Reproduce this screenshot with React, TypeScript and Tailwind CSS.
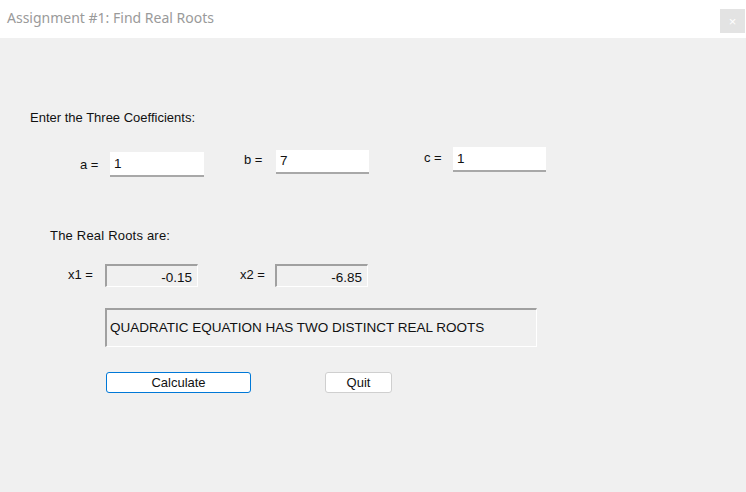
import React from "react";

const sans = { fontFamily: '"Liberation Sans", Arial, sans-serif' };

export default function App() {
  return (
    <div className="w-[746px] h-[492px] overflow-hidden bg-[#f0f0f0] text-[#111]" style={sans}>
      {/* Title bar */}
      <div className="h-[38px] bg-white flex justify-between">
        <div className="pl-[7px] pt-[7px] text-[14px] text-[#9a9a9a]" style={{ fontFamily: '"Noto Sans", "Open Sans", sans-serif' }}>
          Assignment #1: Find Real Roots
        </div>
        <div className="mt-[9px] mr-[1px] w-[25px] h-[24px] bg-[#e3e3e3] flex items-center justify-center text-white text-[13px] leading-none">
          ×
        </div>
      </div>

      {/* Content */}
      <div className="pl-[30px] text-[13px]">
        <div className="pt-[72px] leading-[15px]">Enter the Three Coefficients:</div>

        <div className="flex items-start mt-[22px]">
          <div className="ml-[50px] mt-[5px] flex items-center">
            <span className="w-[30px]">a =</span>
            <div className="w-[94px] h-[25px] bg-white border-b-2 border-[#a8a8a8] pl-[4px] text-[13.5px] leading-[23px]">1</div>
          </div>
          <div className="ml-[40px] mt-[3px] flex items-center">
            <span className="w-[32px] -mt-[4px]">b =</span>
            <div className="w-[93px] h-[24px] bg-white border-b-2 border-[#a8a8a8] pl-[4px] text-[13.5px] leading-[22px]">7</div>
          </div>
          <div className="ml-[55px] flex items-center">
            <span className="w-[29px] -mt-[4px]">c =</span>
            <div className="w-[93px] h-[25px] bg-white border-b-2 border-[#a8a8a8] pl-[4px] text-[13.5px] leading-[23px]">1</div>
          </div>
        </div>

        <div className="ml-[20px] mt-[51px] leading-[15px] tracking-[0.2px]">The Real Roots are:</div>

        <div className="flex items-center mt-[21px]">
          <span className="ml-[38px] w-[37px] -mt-[2px]">x1 =</span>
          <div className="w-[93px] h-[23px] border-t-2 border-l-2 border-[#a0a0a0] border-b border-r border-b-white border-r-white text-right pr-[5px] text-[13.5px] leading-[21px] pt-[1px]">-0.15</div>
          <span className="ml-[42px] w-[35px] -mt-[2px]">x2 =</span>
          <div className="w-[93px] h-[23px] border-t-2 border-l-2 border-[#a0a0a0] border-b border-r border-b-white border-r-white text-right pr-[5px] text-[13.5px] leading-[21px] pt-[1px]">-6.85</div>
        </div>

        <div className="ml-[75px] mt-[21px] w-[432px] h-[39px] border-t-2 border-l-2 border-[#a0a0a0] border-b border-r border-b-white border-r-white pl-[3px] flex items-center text-[13.5px]">
          QUADRATIC EQUATION HAS TWO DISTINCT REAL ROOTS
        </div>

        <div className="flex mt-[25px]">
          <div className="ml-[76px] w-[145px] h-[21px] bg-white border border-[#0078d7] rounded-[3px] flex items-center justify-center">
            Calculate
          </div>
          <div className="ml-[74px] w-[67px] h-[21px] bg-white border border-[#cfcfcf] rounded-[3px] flex items-center justify-center">
            Quit
          </div>
        </div>
      </div>
    </div>
  );
}
